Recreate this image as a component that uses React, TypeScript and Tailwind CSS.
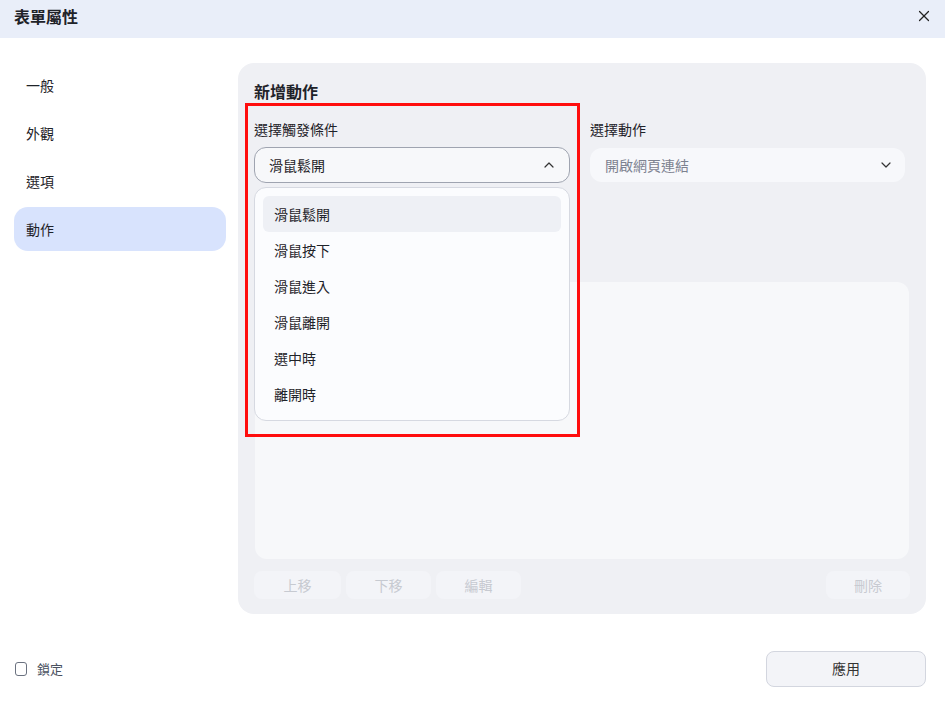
import { ChevronDown, ChevronUp, X } from "lucide-react";

const font = { fontFamily: '"Noto Sans CJK TC", "Noto Sans", sans-serif' };

const navItems = ["一般", "外觀", "選項", "動作"];
const triggers = ["滑鼠鬆開", "滑鼠按下", "滑鼠進入", "滑鼠離開", "選中時", "離開時"];

export default function App() {
  return (
    <div style={font} className="w-[945px] h-[704px] bg-white flex flex-col text-[#1f2329] relative overflow-hidden">
      {/* Header */}
      <div className="h-[38px] bg-[#e9eef9] flex items-center justify-between pl-[14px] pr-[12px] pb-[7px] shrink-0">
        <h1 className="text-[16px] font-bold leading-none">表單屬性</h1>
        <X size={18} strokeWidth={1.6} className="text-[#222]" />
      </div>

      {/* Body */}
      <div className="flex flex-1 pt-[25px] pl-[14px] pr-[19px]">
        {/* Sidebar */}
        <div className="w-[212px] flex flex-col gap-[4px] shrink-0">
          {navItems.map((item, i) => (
            <div
              key={item}
              className={`h-[44px] flex items-center pl-[12px] rounded-[14px] text-[14px] ${
                i === 3 ? "bg-[#d8e3fd]" : ""
              }`}
            >
              {item}
            </div>
          ))}
        </div>

        {/* Main panel */}
        <div className="ml-[12px] flex-1 h-[551px] bg-[#eff0f4] rounded-[16px] flex flex-col px-[16px] pt-[16px] pb-[15px]">
          <h2 className="text-[16px] font-bold leading-[24px]">新增動作</h2>

          <div className="flex gap-[20px] mt-[16px]">
            <div className="w-[316px] relative">
              <div className="text-[14px] leading-[20px]">選擇觸發條件</div>
              <div className="mt-[8px] h-[36px] rounded-[12px] border border-[#9fa4b0] bg-[#f7f8fa] flex items-center justify-between pl-[14px] pr-[12px] text-[14px]">
                <span>滑鼠鬆開</span>
                <ChevronUp size={16} strokeWidth={1.8} className="text-[#333]" />
              </div>

              {/* Dropdown menu */}
              <div className="absolute left-0 top-[68px] w-[316px] z-10 rounded-[12px] border border-[#d6d9e1] bg-[#fbfcfe] p-[8px] flex flex-col">
                {triggers.map((t, i) => (
                  <div
                    key={t}
                    className={`h-[36px] flex items-center pl-[11px] rounded-[6px] text-[14px] ${
                      i === 0 ? "bg-[#eef0f5]" : ""
                    }`}
                  >
                    {t}
                  </div>
                ))}
              </div>
            </div>

            <div className="flex-1 pr-[5px]">
              <div className="text-[14px] leading-[20px]">選擇動作</div>
              <div className="mt-[9px] h-[34px] rounded-[12px] bg-[#f7f8fb] flex items-center justify-between pl-[15px] pr-[11px] text-[14px] text-[#7d8290]">
                <span>開啟網頁連結</span>
                <ChevronDown size={16} strokeWidth={1.8} className="text-[#333]" />
              </div>
            </div>
          </div>

          {/* Action list */}
          <div className="mt-[99px] ml-[1px] mr-[1px] h-[278px] rounded-[12px] bg-[#f7f8fa]" />

          {/* Buttons */}
          <div className="mt-[12px] flex gap-[5px] text-[14px] text-[#c7cad1]">
            <div className="w-[87px] h-[28px] rounded-[8px] bg-[#f3f4f8] flex items-center justify-center">上移</div>
            <div className="w-[85px] h-[28px] rounded-[8px] bg-[#f3f4f8] flex items-center justify-center">下移</div>
            <div className="w-[85px] h-[28px] rounded-[8px] bg-[#f3f4f8] flex items-center justify-center">編輯</div>
            <div className="ml-auto w-[84px] h-[28px] rounded-[8px] bg-[#f3f4f8] flex items-center justify-center">刪除</div>
          </div>
        </div>
      </div>

      {/* Footer */}
      <div className="h-[53px] mb-[9px] flex items-center justify-between pl-[15px] pr-[19px] shrink-0">
        <label className="flex items-center gap-[10px] text-[13px] text-[#4a5160]">
          <span className="w-[12px] h-[14px] rounded-[3px] border-[1.5px] border-[#6b7280] bg-white" />
          鎖定
        </label>
        <button className="w-[160px] h-[36px] rounded-[8px] border border-[#d3d6df] bg-[#f3f4f8] text-[14px] text-[#333]">
          應用
        </button>
      </div>

      {/* Annotation highlight */}
      <div className="absolute left-[245px] top-[103px] w-[335px] h-[334px] border-[3px] border-[#ff0d0d] pointer-events-none z-20" />
    </div>
  );
}
